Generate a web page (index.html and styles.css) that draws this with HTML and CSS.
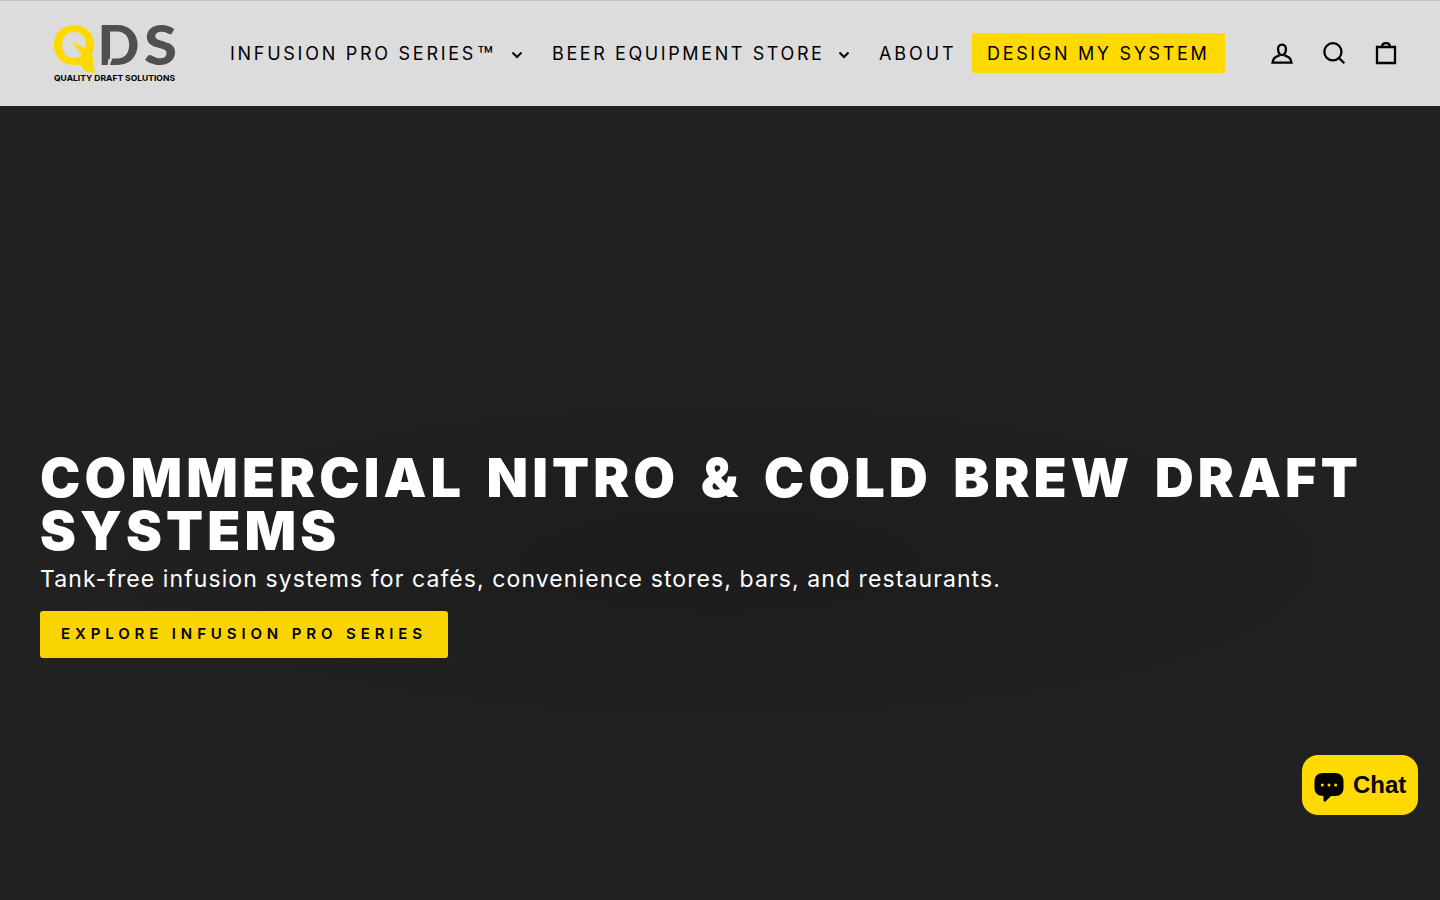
FILE: index.html
```html
<!DOCTYPE html>
<html lang="en">
<head>
    <meta charset="UTF-8">
    <meta name="viewport" content="width=device-width, initial-scale=1.0">
    <title>Quality Draft Solutions</title>
    <link rel="stylesheet" href="styles.css">
</head>
<body>

    <header class="site-header">
        <a class="logo" href="#">
            <svg width="124" height="60" viewBox="0 0 124 60">
                <g class="logo-letters">
                    <text class="logo-q" x="-1" y="42" textLength="44" lengthAdjust="spacingAndGlyphs">Q</text>
                    <text x="44.500" y="42" textLength="42" lengthAdjust="spacingAndGlyphs">D</text>
                    <text x="91" y="42" textLength="33" lengthAdjust="spacingAndGlyphs">S</text>
                </g>
                <path class="logo-bolt" d="M18 18L35 27 34 31 40 34 40.500 46 32 40 26 35 30 33z"/>
                <path class="logo-gap" d="M55.500 36l4-1-3 8h-2z"/>
                <text class="logo-tagline" x="1" y="57.500" textLength="121" lengthAdjust="spacingAndGlyphs">QUALITY DRAFT SOLUTIONS</text>
            </svg>
        </a>

        <nav class="site-nav">
            <a class="nav-link nav-infusion" href="#">Infusion Pro Series<span class="tm">™</span>
                <svg class="chevron" width="12" height="8" viewBox="0 0 12 8"><path d="M1.500 1.500L6 6l4.500-4.500"/></svg>
            </a>
            <a class="nav-link nav-store" href="#">Beer Equipment Store
                <svg class="chevron" width="12" height="8" viewBox="0 0 12 8"><path d="M1.500 1.500L6 6l4.500-4.500"/></svg>
            </a>
            <a class="nav-link nav-about" href="#">About</a>
            <a class="nav-link nav-button" href="#">Design My System</a>
        </nav>

        <div class="header-icons">
            <a href="#" aria-label="Account">
                <svg width="24" height="24" viewBox="0 0 24 24"><path d="M12 3.600c-3 0-4.200 2.200-3.900 5.200.3 3 1.700 5.200 3.900 5.200s3.600-2.200 3.900-5.200c.3-3-.9-5.200-3.900-5.200zM9.500 14.700c-4 .7-6.500 2.600-7 6.900h19c-.5-4.300-3-6.200-7-6.900"/></svg>
            </a>
            <a href="#" aria-label="Search">
                <svg width="24" height="24" viewBox="0 0 24 24"><circle cx="10.900" cy="10.800" r="8.600"/><path d="M17 17l5.300 5.200"/></svg>
            </a>
            <a href="#" aria-label="Cart">
                <svg width="24" height="24" viewBox="0 0 24 24"><path d="M3 6h18v16H3zM8 5.500c.2-2.500 1.900-3.400 4-3.400s3.800.9 4 3.400"/></svg>
            </a>
        </div>
    </header>

    <main class="hero">
        <h1>Commercial Nitro &amp; Cold Brew Draft Systems</h1>
        <p>Tank-free infusion systems for cafés, convenience stores, bars, and restaurants.</p>
        <a class="hero-button" href="#">Explore Infusion Pro Series</a>
    </main>

    <button class="chat-button">
        <svg width="30" height="30" viewBox="0 0 30 30">
            <path d="M9.500 1h11c6 0 9 3 9 8.500v6c0 5.500-3 8.500-8 8.500H17l-5.300 5.200c-1 .9-2.200.4-2.200-1V24C3.500 24 .5 21 .5 15.500v-6C.5 4 3.500 1 9.500 1z"/>
            <g class="chat-dots"><circle cx="8.300" cy="13" r="1.500"/><circle cx="15" cy="13" r="1.500"/><circle cx="21.700" cy="13" r="1.500"/></g>
        </svg>
        <span>Chat</span>
    </button>

</body>
</html>
```
FILE: styles.css
```css
* {
    box-sizing: border-box;
}
body {
    margin: 0;
    height: 100vh;
    overflow: hidden;
    display: flex;
    flex-direction: column;
    font-family: Inter, "Liberation Sans", sans-serif;
    background-color: #212121;
    color: #fff;
}
a {
    color: inherit;
    text-decoration: none;
}
.site-header {
    height: 106px;
    flex: none;
    display: flex;
    align-items: center;
    padding: 0 42px 1px 53px;
    background-color: #dcdcdc;
    border-top: 1px solid #c4c4c4;
    color: #000;
}
.logo {
    width: 177px;
    flex: none;
}
.logo svg {
    display: block;
    overflow: visible;
}
.logo-letters {
    font-family: Lato, sans-serif;
    font-weight: 900;
    font-size: 56px;
    fill: #505050;
}
.logo-q, .logo-bolt {
    fill: #ffd900;
}
.logo-gap {
    fill: #dcdcdc;
}
.logo-tagline {
    font-size: 8px;
    font-weight: 700;
    fill: #000;
}
.site-nav {
    display: flex;
    align-items: center;
    flex: 1;
}
.nav-link {
    display: flex;
    align-items: center;
    height: 40px;
    padding-top: 2px;
    font-size: 18px;
    line-height: 38px;
    text-transform: uppercase;
    white-space: nowrap;
}
.nav-infusion {
    width: 322px;
    letter-spacing: 2.73px;
}
.nav-store {
    width: 327px;
    letter-spacing: 2.6px;
}
.nav-about {
    width: 93px;
    letter-spacing: 2.9px;
}
.nav-button {
    width: 253px;
    padding-left: 15px;
    border-radius: 2px;
    background-color: #ffd900;
    letter-spacing: 2.67px;
}
.tm {
    height: 38px;
    padding-top: 2px;
    margin-left: 1px;
    font-size: 26px;
}
.chevron {
    margin: 2px 0 0 13px;
}
.nav-infusion .chevron {
    margin-left: 15px;
}
.chevron, .header-icons svg {
    display: block;
    fill: none;
    stroke: #000;
    stroke-width: 2;
}
.header-icons {
    display: flex;
    gap: 28px;
}
.header-icons svg {
    stroke-width: 2.3;
}
.hero {
    flex: 1;
    padding: 345px 40px 0;
    background: radial-gradient(ellipse 660px 170px at 720px 455px, #1c1c1c, #212121);
}
.hero h1 {
    margin: 0;
    font-size: 54px;
    font-weight: 900;
    line-height: 53px;
    letter-spacing: 4.1px;
    word-spacing: 6.5px;
    text-transform: uppercase;
}
.hero p {
    margin: 5px 0 14px;
    font-size: 23px;
    line-height: 35px;
    letter-spacing: 1.09px;
    white-space: nowrap;
}
.hero-button {
    display: block;
    width: 408px;
    height: 47px;
    padding-left: 21px;
    border-radius: 3px;
    background-color: #f9d400;
    color: #000;
    font-size: 15px;
    font-weight: 600;
    line-height: 46px;
    letter-spacing: 4.88px;
    text-transform: uppercase;
    white-space: nowrap;
}
.chat-button {
    position: fixed;
    right: 22px;
    bottom: 85px;
    width: 116px;
    height: 60px;
    display: flex;
    align-items: center;
    gap: 9px;
    padding: 0 12px;
    border: 0;
    border-radius: 16px;
    background-color: #ffd900;
    color: #000;
    font: bold 24px "Liberation Sans", Arial, sans-serif;
}
.chat-button svg {
    flex: none;
    margin-top: 4px;
}
.chat-dots {
    fill: #ffd900;
}
```
